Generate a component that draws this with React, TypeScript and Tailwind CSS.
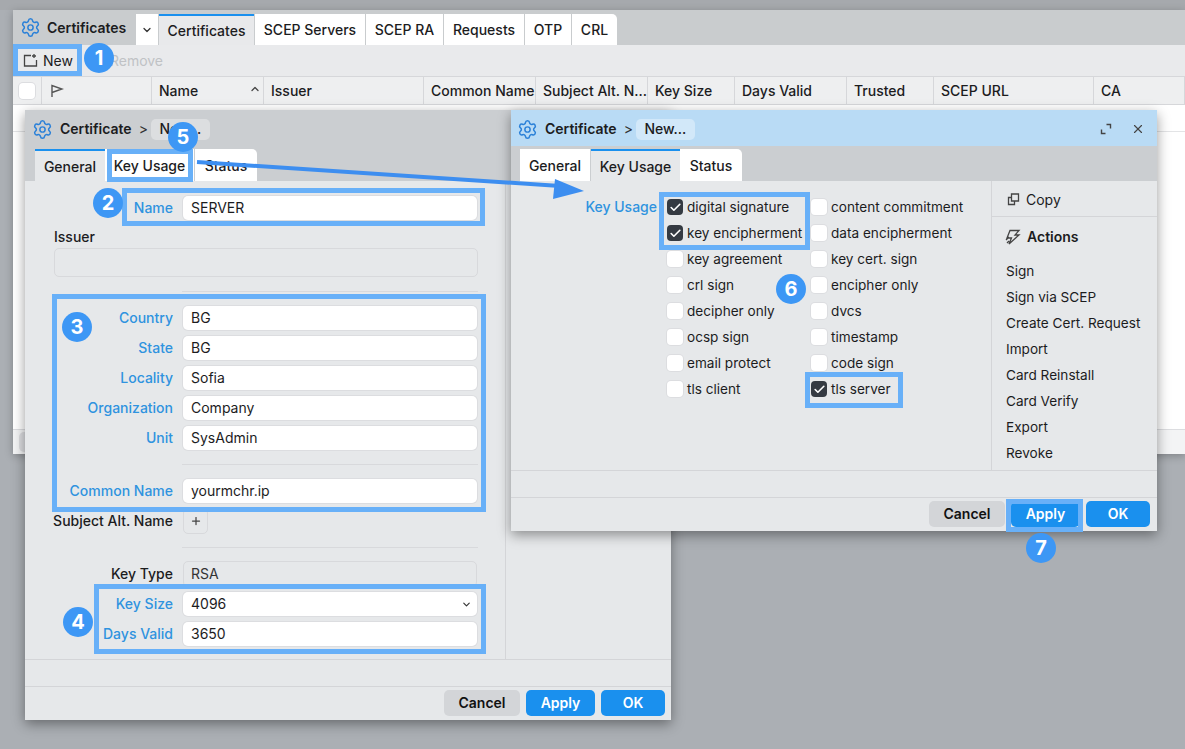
import React from "react";
import { Settings, Plus, X, ChevronDown, ChevronUp, Check } from "lucide-react";

const Gear = ({ className = "" }: { className?: string }) => (
  <Settings size={21} strokeWidth={1.7} className={"text-[#2a80d8] " + className} />
);

function Row({ label, value, blue, children }: { label: string; value?: string; blue?: boolean; children?: React.ReactNode }) {
  return (
    <div className="flex h-[24px] items-center">
      <div className={"w-[148px] pr-0 text-right font-medium " + (blue ? "text-[#2f93df]" : "text-[#1c1c1e]")}>{label}</div>
      <div className="ml-[10px] w-[294px]">
        {children ?? (
          <div className="flex h-[24px] items-center rounded-[5px] bg-white pl-[8px] text-[#1c1c1e] shadow-[0_0_0_1px_#dcdde0]">{value}</div>
        )}
      </div>
    </div>
  );
}

const Sep = ({ className }: { className: string }) => (
  <div className={"ml-[157px] h-px w-[296px] bg-[#d8d9dc] " + className} />
);

function Footer({ right }: { right: string }) {
  return (
    <div className={"flex h-[34px] items-start justify-end gap-[6px] border-t border-[#d4d5d8] pt-[3px] font-semibold " + right}>
      <button className="h-[26px] w-[76px] rounded-[5px] bg-[#d3d5d8] font-semibold text-[#111]">Cancel</button>
      <button className="h-[26px] w-[69px] rounded-[5px] bg-[#1a90ee] font-semibold text-white">Apply</button>
      <button className="h-[26px] w-[64px] rounded-[5px] bg-[#1a90ee] font-semibold text-white">OK</button>
    </div>
  );
}

function DialogHead({ blue, chip }: { blue?: boolean; chip: string }) {
  return (
    <div className={"flex h-[36px] shrink-0 items-center pt-[2px] " + (blue ? "bg-[#b9dbf5] pl-[6px]" : "bg-[#cbced1] pl-[7px]")}>
      <Gear />
      <span className="ml-[7px] font-semibold text-[#1c1c1e]">Certificate</span>
      <span className="ml-[7px] text-[#333]">&gt;</span>
      <span className={"ml-[3px] flex h-[21px] w-[59px] items-center justify-center rounded-[5px] font-medium text-[#1c1c1e] " + (blue ? "bg-[#d2e8f9]" : "bg-[#dcdee0]")}>{chip}</span>
      {blue && (
        <div className="ml-auto flex items-center pr-[12px] text-[#444]">
          <svg width="12" height="12" viewBox="0 0 12 12" fill="none" stroke="currentColor" strokeWidth="1.4" className="mr-[19px]">
            <path d="M1.5 6.5v4h4M6.5 1.5h4v4" />
          </svg>
          <X size={14} strokeWidth={2} />
        </div>
      )}
    </div>
  );
}

function DTabs({ active, left }: { active: number; left: string }) {
  const tabs = [
    ["General", "w-[70px]"],
    ["Key Usage", "w-[89px]"],
    ["Status", "w-[62px]"],
  ];
  return (
    <div className={"flex h-[35px] shrink-0 items-end bg-[#cbced1] " + left}>
      {tabs.map(([t, w], i) => (
        <div
          key={t}
          className={
            "flex h-[32px] items-center justify-center pt-[2px] font-medium text-[#1c1c1e] " + w + " " +
            (i === 2 ? "rounded-tr-[5px] " : "") +
            (i === active ? "border-t-2 border-[#1a90ee] bg-[#e6e8ea]" : "mr-px bg-white")
          }
        >
          {t}
        </div>
      ))}
    </div>
  );
}

function Box({ checked, label }: { checked?: boolean; label: string }) {
  return (
    <div className="flex h-[26px] items-center">
      <span
        className={
          "flex h-[16px] w-[16px] items-center justify-center rounded-[4px] " +
          (checked ? "bg-[#343a42]" : "bg-white shadow-[0_0_0_1px_#dcdde0]")
        }
      >
        {checked && <Check size={13} strokeWidth={3} className="text-white" />}
      </span>
      <span className="ml-[4px] text-[13.6px] text-[#1c1c1e]">{label}</span>
    </div>
  );
}

const Badge = ({ n, className }: { n: number; className: string }) => (
  <div className={"absolute z-30 flex h-[30px] w-[30px] items-center justify-center rounded-full bg-[#3d97f5] text-[20px] font-bold text-white " + className}>
    {n}
  </div>
);

const Mark = ({ className }: { className: string }) => (
  <div className={"absolute z-20 border-[5px] border-[#68b0f8] " + className} />
);

const cols: [string, string][] = [
  ["Name", "w-[112px]"],
  ["Issuer", "w-[160px]"],
  ["Common Name", "w-[112px]"],
  ["Subject Alt. N...", "w-[112px]"],
  ["Key Size", "w-[87px]"],
  ["Days Valid", "w-[112px]"],
  ["Trusted", "w-[87px]"],
  ["SCEP URL", "w-[160px]"],
  ["CA", "w-[91px]"],
];

const col1 = ["digital signature", "key encipherment", "key agreement", "crl sign", "decipher only", "ocsp sign", "email protect", "tls client"];
const col2 = ["content commitment", "data encipherment", "key cert. sign", "encipher only", "dvcs", "timestamp", "code sign", "tls server"];
const actions = ["Sign", "Sign via SCEP", "Create Cert. Request", "Import", "Card Reinstall", "Card Verify", "Export", "Revoke"];

export default function App() {
  return (
    <div className="relative h-[749px] w-[1185px] overflow-hidden bg-[#abafb4] font-['Inter',sans-serif] text-[14px] leading-[20px]">
      <div className="h-[10px] bg-[#a6a9ad]" />
      {/* main window */}
      <div className="absolute left-[13px] right-0 top-[10px] flex h-[444px] flex-col bg-white shadow-[0_2px_8px_rgba(0,0,0,0.25)]">
        <div className="flex h-[35px] shrink-0 bg-[#c9ccce]">
          <div className="flex w-[123px] items-center pl-[7px]">
            <Gear />
            <span className="ml-[6px] font-semibold text-[#1c1c1e]">Certificates</span>
          </div>
          <div className="mt-[4px] flex h-[31px] w-[22px] items-center justify-center bg-white">
            <ChevronDown size={12} strokeWidth={2.5} className="text-[#333]" />
          </div>
          <div className="mt-[4px] ml-px flex h-[31px] w-[95px] items-center justify-center border-t-2 border-[#1a90ee] bg-[#e8e9eb] font-medium text-[#1c1c1e]">Certificates</div>
          <div className="mt-[4px] ml-px flex h-[31px] w-[110px] items-center justify-center bg-white font-medium text-[#1c1c1e]">SCEP Servers</div>
          <div className="mt-[4px] ml-px flex h-[31px] w-[77px] items-center justify-center bg-white font-medium text-[#1c1c1e]">SCEP RA</div>
          <div className="mt-[4px] ml-px flex h-[31px] w-[80px] items-center justify-center bg-white font-medium text-[#1c1c1e]">Requests</div>
          <div className="mt-[4px] ml-px flex h-[31px] w-[46px] items-center justify-center bg-white font-medium text-[#1c1c1e]">OTP</div>
          <div className="mt-[4px] ml-px flex h-[31px] w-[45px] items-center justify-center rounded-tr-[5px] bg-white font-medium text-[#1c1c1e]">CRL</div>
        </div>
        <div className="flex h-[31px] shrink-0 items-center bg-[#e9eaec] pl-[10px]">
          <svg width="15" height="15" viewBox="0 0 15 15" fill="none" stroke="#444" strokeWidth="1.3">
            <path d="M8 2.5H1.5v10.5h12V7M1.5 2.5h3M11 1v4M9 3h4" />
          </svg>
          <span className="ml-[5px] text-[#1c1c1e]">New</span>
          <span className="ml-[37px] text-[#c0c2c5]">Remove</span>
        </div>
        <div className="flex h-[29px] shrink-0 items-center border-y border-[#d6d7da] bg-[#eeeff0] font-medium text-[#1c1c1e]">
          <div className="flex h-full w-[29px] items-center justify-center border-r border-[#d6d7da]">
            <span className="h-[16px] w-[16px] rounded-[4px] bg-white shadow-[0_0_0_1px_#dcdde0]" />
          </div>
          <div className="flex h-full w-[110px] items-center border-r border-[#d6d7da] pl-[8px]">
            <svg width="14" height="14" viewBox="0 0 14 14" fill="none" stroke="#555" strokeWidth="1.4">
              <path d="M2 13V1.5L12 5 2 8.5" />
            </svg>
          </div>
          {cols.map(([c, w]) => (
            <div key={c} className={"relative flex h-full items-center whitespace-nowrap border-r border-[#d6d7da] pl-[7px] " + w}>
              {c}
              {c === "Name" && <ChevronUp size={12} strokeWidth={2.5} className="absolute right-[2px] top-[6px] text-[#444]" />}
            </div>
          ))}
        </div>
        <div className="flex-1 bg-white">
          <div className="mt-[26px] h-px bg-[#e3e4e6]" />
        </div>
        <div className="flex h-[25px] shrink-0 items-center border-t border-[#dcdde0] bg-[#f3f4f5] pl-[6px]">
          <div className="h-[20px] w-[30px] rounded-[5px] bg-[#dcdde0]" />
        </div>
      </div>

      {/* left dialog */}
      <div className="absolute left-[25px] top-[110px] flex h-[610px] w-[646px] flex-col bg-[#e6e8ea] shadow-[0_4px_12px_rgba(0,0,0,0.4)]">
        <DialogHead chip="New..." />
        <DTabs active={0} left="pl-[10px]" />
        <div className="flex min-h-0 flex-1">
          <div className="w-[481px] border-r border-[#d4d5d8] pt-[15px]">
            <Row label="Name" value="SERVER" blue />
            <div className="ml-[29px] mt-[7px] font-medium text-[#1c1c1e]">Issuer</div>
            <div className="ml-[29px] mt-[1px] h-[29px] w-[424px] rounded-[5px] border border-[#d8d9dc]" />
            <Sep className="mt-[14px]" />
            <div className="mt-[14px] flex flex-col gap-[6px]">
              <Row label="Country" value="BG" blue />
              <Row label="State" value="BG" blue />
              <Row label="Locality" value="Sofia" blue />
              <Row label="Organization" value="Company" blue />
              <Row label="Unit" value="SysAdmin" blue />
            </div>
            <Sep className="mt-[14px]" />
            <div className="mt-[14px]">
              <Row label="Common Name" value="yourmchr.ip" blue />
            </div>
            <div className="mt-[6px]">
              <Row label="Subject Alt. Name">
                <div className="flex h-[26px] w-[25px] items-center justify-center rounded-[5px] border border-[#d8d9dc]">
                  <Plus size={12} strokeWidth={2.5} className="text-[#444]" />
                </div>
              </Row>
            </div>
            <Sep className="mt-[14px]" />
            <div className="mt-[14px]">
              <Row label="Key Type">
                <div className="flex h-[26px] items-center rounded-[5px] border border-[#d8d9dc] pl-[7px] text-[#333]">RSA</div>
              </Row>
            </div>
            <div className="mt-[6px] flex flex-col gap-[6px]">
              <Row label="Key Size" blue>
                <div className="flex h-[24px] items-center justify-between rounded-[5px] bg-white pl-[8px] pr-[5px] text-[#1c1c1e] shadow-[0_0_0_1px_#dcdde0]">
                  4096
                  <ChevronDown size={11} strokeWidth={2.5} className="text-[#333]" />
                </div>
              </Row>
              <Row label="Days Valid" value="3650" blue />
            </div>
          </div>
          <div className="flex-1" />
        </div>
        <div className="h-[27px] shrink-0 border-t border-[#d4d5d8]" />
        <Footer right="pr-[6px]" />
      </div>

      {/* right dialog */}
      <div className="absolute left-[511px] top-[110px] z-10 flex h-[421px] w-[646px] flex-col bg-[#e6e8ea] shadow-[0_4px_12px_rgba(0,0,0,0.4)]">
        <DialogHead blue chip="New..." />
        <DTabs active={1} left="pl-[9px]" />
        <div className="flex min-h-0 flex-1">
          <div className="flex w-[481px] border-r border-[#d4d5d8] pt-[13px]">
            <div className="h-[26px] w-[146px] text-right font-medium leading-[26px] text-[#2f93df]">Key Usage</div>
            <div className="ml-[10px] w-[144px]">
              {col1.map((t, i) => <Box key={t} label={t} checked={i < 2} />)}
            </div>
            <div>
              {col2.map((t, i) => <Box key={t} label={t} checked={i === 7} />)}
            </div>
          </div>
          <div className="flex-1 text-[#1c1c1e]">
            <div className="flex h-[36px] items-center border-b border-[#d4d5d8] pl-[15px] pt-[2px]">
              <svg width="13" height="13" viewBox="0 0 13 13" fill="none" stroke="#444" strokeWidth="1.3">
                <path d="M4.5 1h7v7h-7zM4.5 4.5H1.5v7h6V8" />
              </svg>
              <span className="ml-[6px]">Copy</span>
            </div>
            <div className="flex h-[40px] items-center pl-[13px]">
              <svg width="16" height="16" viewBox="0 0 16 16" fill="none" stroke="#444" strokeWidth="1.3">
                <path d="M5 1.5h9l-4 4.5h4L4 15l2.5-6H2zM1 11l3-3M2 14l2-2" />
              </svg>
              <span className="ml-[6px] font-semibold">Actions</span>
            </div>
            <div className="pl-[14px] pt-[1px] text-[13.6px]">
              {actions.map((a) => (
                <div key={a} className="flex h-[26px] items-center">{a}</div>
              ))}
            </div>
          </div>
        </div>
        <div className="h-[27px] shrink-0 border-t border-[#d4d5d8]" />
        <Footer right="pr-[7px]" />
      </div>

      {/* annotations */}
      <Mark className="left-[13px] top-[44px] h-[32px] w-[69px]" />
      <Mark className="left-[107px] top-[149px] h-[33px] w-[86px]" />
      <Mark className="left-[122px] top-[188px] h-[38px] w-[363px]" />
      <Mark className="left-[52px] top-[294px] h-[218px] w-[434px]" />
      <Mark className="left-[94px] top-[584px] h-[70px] w-[392px]" />
      <Mark className="left-[659px] top-[192px] h-[58px] w-[151px]" />
      <Mark className="left-[805px] top-[372px] h-[36px] w-[98px]" />
      <Mark className="left-[1006px] top-[499px] h-[33px] w-[77px]" />
      <svg className="absolute left-0 top-0 z-20" width="1185" height="749" fill="none">
        <path d="M197 162 L560 186" stroke="#3d8ef0" strokeWidth="4" />
        <path d="M584 191 L555 179 L553 199 Z" fill="#3d8ef0" />
      </svg>
      <Badge n={1} className="left-[84px] top-[43px]" />
      <Badge n={2} className="left-[93px] top-[188px]" />
      <Badge n={3} className="left-[62px] top-[312px]" />
      <Badge n={4} className="left-[63px] top-[607px]" />
      <Badge n={5} className="left-[168px] top-[122px]" />
      <Badge n={6} className="left-[776px] top-[274px]" />
      <Badge n={7} className="left-[1026px] top-[533px]" />
    </div>
  );
}
